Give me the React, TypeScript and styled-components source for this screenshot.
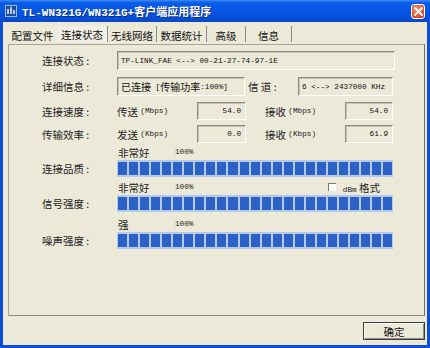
import {FC} from 'react'
import styled, {createGlobalStyle} from 'styled-components'

const CJK = `"Noto Sans CJK SC", "Noto Sans", sans-serif`
const MONO = `"Liberation Mono", "Noto Sans CJK SC", monospace`
const FACE = '#ECE9D8'

const GlobalStyle = createGlobalStyle`
  html, body {
    margin: 0;
    padding: 0;
    width: 430px;
    height: 348px;
    overflow: hidden;
    background: ${FACE};
  }
`

const TABS = [
  {name: '配置文件', width: 49, sep: false},
  {name: '连接状态', width: 51, sep: true, active: true},
  {name: '无线网络', width: 49, sep: true},
  {name: '数据统计', width: 50, sep: true},
  {name: '高级', width: 39, sep: true},
  {name: '信息', width: 46, sep: true},
]

const SEGMENTS = Array.from({length: 25}, (_, i) => i)

const AppIcon: FC = () => (
  <svg width="12" height="12" viewBox="0 0 12 12">
    <rect x="0.5" y="0.5" width="11" height="11" fill="#1F4D9C" stroke="#9DB8E6" />
    <path d="M3 9 V4 M6 9 V2.5 M9 9 V5" stroke="#FFFFFF" strokeWidth="1.4" />
    <circle cx="6" cy="2.5" r="1" fill="#7FE07A" />
  </svg>
)

const CloseIcon: FC = () => (
  <svg width="9" height="9" viewBox="0 0 9 9">
    <path d="M1 1 L8 8 M8 1 L1 8" stroke="#fff" strokeWidth="1.8" strokeLinecap="square" />
  </svg>
)

const Meter: FC<{label: string; level: string; extra?: boolean; top: number}> = ({
  label,
  level,
  extra,
  top,
}) => (
  <MeterBlock style={{marginTop: top}}>
    <Caption>
      <Level>{level}</Level>
      <Percent>100%</Percent>
      {extra && (
        <DbmToggle>
          <Check />
          <DbmText>
            <Small>dBm</Small> 格式
          </DbmText>
        </DbmToggle>
      )}
    </Caption>
    <MeterLabel>{label} :</MeterLabel>
    <Bar>
      {SEGMENTS.map(i => (
        <Segment key={i} />
      ))}
    </Bar>
  </MeterBlock>
)

const App: FC = () => (
  <Window>
    <GlobalStyle />
    <TitleBar>
      <AppIcon />
      <Title>
        TL-WN321G/WN321G+<TitleHan>客户端应用程序</TitleHan>
      </Title>
      <CloseButton>
        <CloseIcon />
      </CloseButton>
    </TitleBar>

    <Body>
      <TabStrip>
        {TABS.map(t => (
          <Tab key={t.name} $width={t.width} $sep={t.sep} $active={!!t.active}>
            {t.name}
          </Tab>
        ))}
      </TabStrip>

      <Panel>
        <Row $h={19} $top={0}>
          <Label>连接状态 :</Label>
          <Field $w={278}>TP-LINK_FAE &lt;--&gt; 00-21-27-74-97-1E</Field>
        </Row>
        <Row $h={19} $top={7}>
          <Label>详细信息 :</Label>
          <Field $w={128}>
            <Han>已连接</Han> [<Han>传输功率</Han>:100%]
          </Field>
          <Inline $w={50} $ml={3}>信 道 :</Inline>
          <Field $w={95}>6 &lt;--&gt; 2437000 KHz</Field>
        </Row>
        <Row $h={18} $top={6}>
          <Label>连接速度 :</Label>
          <Inline $w={80}>
            传送 <Small>(Mbps)</Small>
          </Inline>
          <Field $w={49} $right>54.0</Field>
          <Inline $w={80} $ml={19}>
            接收 <Small>(Mbps)</Small>
          </Inline>
          <Field $w={48} $right>54.0</Field>
        </Row>
        <Row $h={18} $top={5}>
          <Label>传输效率 :</Label>
          <Inline $w={80}>
            发送 <Small>(Kbps)</Small>
          </Inline>
          <Field $w={49} $right>0.0</Field>
          <Inline $w={80} $ml={19}>
            接收 <Small>(Kbps)</Small>
          </Inline>
          <Field $w={48} $right>61.9</Field>
        </Row>

        <Meter label="连接品质" level="非常好" top={2} />
        <Meter label="信号强度" level="非常好" extra top={3} />
        <Meter label="噪声强度" level="强" top={5} />
      </Panel>

      <Footer>
        <OkButton>确定</OkButton>
      </Footer>
    </Body>
  </Window>
)

const Window = styled.div`
  width: 430px;
  height: 348px;
  display: flex;
  flex-direction: column;
  background: #0A4FD4;
  box-sizing: border-box;
`
const TitleBar = styled.div`
  height: 22px;
  flex: none;
  display: flex;
  align-items: center;
  padding: 0 5px 0 5px;
  gap: 5px;
  background: linear-gradient(
    180deg,
    #3D8BF2 0%,
    #0A5DE8 12%,
    #0556E4 45%,
    #0450DA 80%,
    #0A48C2 100%
  );
`
const Title = styled.div`
  flex: 1;
  margin-left: 0;
  font-family: ${MONO};
  font-weight: bold;
  font-size: 11px;
  color: #fff;
  white-space: nowrap;
  text-shadow: 1px 1px 0 #0A2A80;
`
const TitleHan = styled.span`
  font-family: ${CJK};
  font-size: 11px;
  letter-spacing: 0;
`
const CloseButton = styled.div`
  width: 14px;
  height: 15px;
  display: flex;
  align-items: center;
  justify-content: center;
  border: 1px solid #fff;
  border-radius: 3px;
  box-sizing: border-box;
  background: radial-gradient(circle at 40% 35%, #F39A7C, #E2533A 60%, #C4391F);
`
const Body = styled.div`
  flex: 1;
  margin: 0 3px 3px 3px;
  padding: 2px 2px 0 5px;
  background: ${FACE};
  display: flex;
  flex-direction: column;
`
const TabStrip = styled.div`
  height: 20px;
  display: flex;
  align-items: stretch;
`
const Tab = styled.div<{$width: number; $sep: boolean; $active: boolean}>`
  width: ${p => p.$width}px;
  box-sizing: border-box;
  display: flex;
  align-items: center;
  justify-content: center;
  padding-top: ${p => (p.$active ? 0 : 2)}px;
  font-family: ${CJK};
  font-size: 10.5px;
  color: #111;
  background: ${p => (p.$active ? '#F2F0E6' : 'transparent')};
  border-right: ${p => (p.$sep ? '1px solid #8A8A8A' : 'none')};
  margin: 2px 0;
`
const Panel = styled.div`
  height: 272px;
  box-sizing: border-box;
  border: 1px solid #A7A69A;
  border-right-color: #6F6E66;
  border-bottom-color: #8F8E84;
  padding: 6px 0 0 33px;
  display: flex;
  flex-direction: column;
`
const Row = styled.div<{$h: number; $top: number}>`
  height: ${p => p.$h}px;
  margin-top: ${p => p.$top}px;
  display: flex;
  align-items: stretch;
`
const Label = styled.div`
  width: 75px;
  flex: none;
  display: flex;
  align-items: center;
  font-family: ${CJK};
  font-size: 10.5px;
  color: #222;
  white-space: pre;
`
const Inline = styled.div<{$w: number; $ml?: number}>`
  width: ${p => p.$w}px;
  margin-left: ${p => p.$ml ?? 0}px;
  flex: none;
  display: flex;
  align-items: center;
  font-family: ${CJK};
  font-size: 10.5px;
  color: #222;
  white-space: pre;
`
const Small = styled.span`
  font-family: ${MONO};
  font-size: 7.7px;
`
const Han = styled.span`
  font-family: ${CJK};
  font-size: 10px;
`
const Field = styled.div<{$w: number; $right?: boolean}>`
  width: ${p => p.$w}px;
  flex: none;
  box-sizing: border-box;
  display: flex;
  align-items: center;
  justify-content: ${p => (p.$right ? 'flex-end' : 'flex-start')};
  padding: 0 4px 0 3px;
  border: 1px solid #7F9DB9;
  border-color: #8C8B84 #FFFFFF #FFFFFF #8C8B84;
  box-shadow: inset 1px 1px 0 #C6C4B8;
  font-family: ${MONO};
  font-size: 7.7px;
  color: #111;
  white-space: pre;
  overflow: hidden;
`
const MeterBlock = styled.div`
  display: grid;
  grid-template-columns: 75px 276px;
  grid-template-rows: 14px 17px;
  row-gap: 1px;
`
const Caption = styled.div`
  grid-column: 2;
  grid-row: 1;
  display: flex;
  align-items: center;
  font-family: ${CJK};
  font-size: 10.5px;
  color: #222;
`
const Level = styled.span`
  width: 57px;
  padding-left: 1px;
`
const Percent = styled.span`
  font-family: ${MONO};
  font-size: 7.7px;
`
const DbmToggle = styled.span`
  margin-left: auto;
  margin-right: 13px;
  display: flex;
  align-items: center;
  gap: 7px;
`
const Check = styled.span`
  width: 8px;
  height: 8px;
  box-sizing: border-box;
  background: #fff;
  border-top: 1px solid #7A7A72;
  border-left: 1px solid #7A7A72;
`
const DbmText = styled.span`
  font-size: 10.5px;
`
const MeterLabel = styled.div`
  grid-column: 1;
  grid-row: 2;
  display: flex;
  align-items: center;
  font-family: ${CJK};
  font-size: 10.5px;
  color: #222;
  white-space: pre;
`
const Bar = styled.div`
  grid-column: 2;
  grid-row: 2;
  display: flex;
  gap: 2px;
  padding: 2px 1px;
  box-sizing: border-box;
  background: #B3C9EE;
`
const Segment = styled.div`
  flex: 1;
  background: #2C62C6;
`
const Footer = styled.div`
  flex: 1;
  display: flex;
  justify-content: flex-end;
  align-items: flex-start;
  padding-top: 6px;
`
const OkButton = styled.div`
  width: 62px;
  height: 18px;
  box-sizing: border-box;
  display: flex;
  align-items: center;
  justify-content: center;
  border: 1px solid #3B3B38;
  box-shadow: inset 1px 1px 0 #FFFFFF, inset -1px -1px 0 #8C8B84;
  background: ${FACE};
  font-family: ${CJK};
  font-size: 10.5px;
  color: #111;
`

export default App
